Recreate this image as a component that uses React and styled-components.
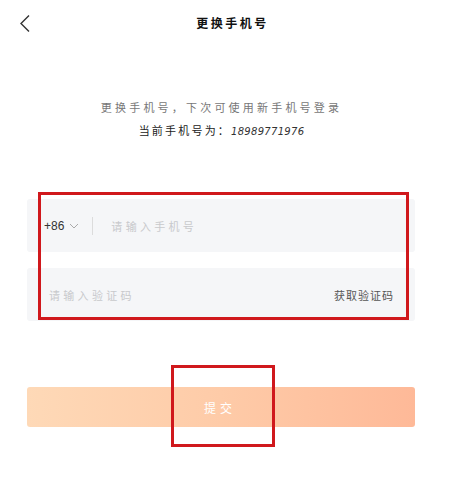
import styled, { createGlobalStyle } from "styled-components";

const GlobalStyle = createGlobalStyle`
  body {
    margin: 0;
    background: #ffffff;
    font-family: "Noto Sans CJK SC", "Noto Sans", sans-serif;
  }
`;

const Page = styled.div`
  width: 461px;
  height: 488px;
  position: relative;
  background: #ffffff;
  overflow: hidden;
`;

const NavBar = styled.div`
  height: 44px;
  display: grid;
  grid-template-columns: 60px 1fr 60px;
  align-items: center;
`;

const BackButton = styled.div`
  display: flex;
  align-items: center;
  padding-left: 19px;
  padding-top: 2px;
`;

const Title = styled.h1`
  margin: 0;
  text-align: center;
  font-size: 12px;
  font-weight: 700;
  letter-spacing: 2.5px;
  color: #111;
  padding-left: 4px;
`;

const Intro = styled.div`
  margin-top: 55px;
  display: flex;
  flex-direction: column;
  align-items: center;
  gap: 6px;
  padding-right: 18px;
`;

const IntroText = styled.p`
  margin: 0;
  line-height: 17px;
  font-size: 11px;
  letter-spacing: ${(p) => (p.$current ? "2.2px" : "3.2px")};
  color: ${(p) => (p.$current ? "#222" : "#777")};
`;

const Number = styled.span`
  font-family: "DejaVu Sans", sans-serif;
  font-style: italic;
  font-size: 10px;
  letter-spacing: 0.3px;
  color: #333;
`;

const Form = styled.div`
  position: relative;
  margin-top: 59px;
  margin-left: 27px;
  width: 388px;
  display: flex;
  flex-direction: column;
  gap: 16px;
`;

const Field = styled.div`
  height: 53px;
  background: #f5f6f8;
  border-radius: 3px;
  display: flex;
  align-items: center;
  padding: ${(p) => (p.$code ? "0 21px 0 22px" : "0 17px")};
  box-sizing: border-box;
  justify-content: space-between;
`;

const AreaCode = styled.div`
  display: flex;
  align-items: center;
  gap: 5px;
  font-family: "Liberation Sans", sans-serif;
  font-size: 12px;
  color: #333;
`;

const Divider = styled.div`
  width: 1px;
  height: 18px;
  background: #dcdcdc;
  margin: 0 18px 0 13px;
`;

const Placeholder = styled.span`
  font-size: 11px;
  letter-spacing: 3.3px;
  color: #c8c9cc;
  flex: 1;
`;

const CodeLink = styled.span`
  font-size: 11px;
  letter-spacing: 1px;
  color: #555;
`;

const Marker = styled.div`
  position: absolute;
  border: 3px solid #d0181c;
  box-sizing: border-box;
  pointer-events: none;
`;

const FormMarker = styled(Marker)`
  left: 11px;
  top: -7px;
  width: 371px;
  height: 128px;
`;

const SubmitWrap = styled.div`
  position: relative;
  margin-top: 66px;
  margin-left: 27px;
  width: 388px;
`;

const Submit = styled.button`
  width: 100%;
  height: 40px;
  border: none;
  border-radius: 3px;
  background: linear-gradient(90deg, #fed9b7 0%, #fecba8 50%, #feb998 100%);
  color: #ffffff;
  font-family: inherit;
  font-size: 12px;
  letter-spacing: 4px;
  padding-left: 4px;
`;

const SubmitMarker = styled(Marker)`
  left: 144px;
  top: -22px;
  width: 104px;
  height: 82px;
`;

function App() {
  return (
    <Page>
      <GlobalStyle />
      <NavBar>
        <BackButton>
          <svg width="12" height="19" viewBox="0 0 12 19">
            <path
              d="M10 1.5 L2 9.5 L10 17.5"
              fill="none"
              stroke="#333"
              strokeWidth="1.4"
            />
          </svg>
        </BackButton>
        <Title>更换手机号</Title>
        <div />
      </NavBar>
      <Intro>
        <IntroText>更换手机号，下次可使用新手机号登录</IntroText>
        <IntroText $current>
          当前手机号为：<Number>18989771976</Number>
        </IntroText>
      </Intro>
      <Form>
        <Field>
          <AreaCode>
            +86
            <svg width="10" height="6" viewBox="0 0 10 6">
              <path d="M1 1 L5 5 L9 1" fill="none" stroke="#aaa" strokeWidth="1" />
            </svg>
          </AreaCode>
          <Divider />
          <Placeholder>请输入手机号</Placeholder>
        </Field>
        <Field $code>
          <Placeholder>请输入验证码</Placeholder>
          <CodeLink>获取验证码</CodeLink>
        </Field>
        <FormMarker />
      </Form>
      <SubmitWrap>
        <Submit>提交</Submit>
        <SubmitMarker />
      </SubmitWrap>
    </Page>
  );
}

export default App;
